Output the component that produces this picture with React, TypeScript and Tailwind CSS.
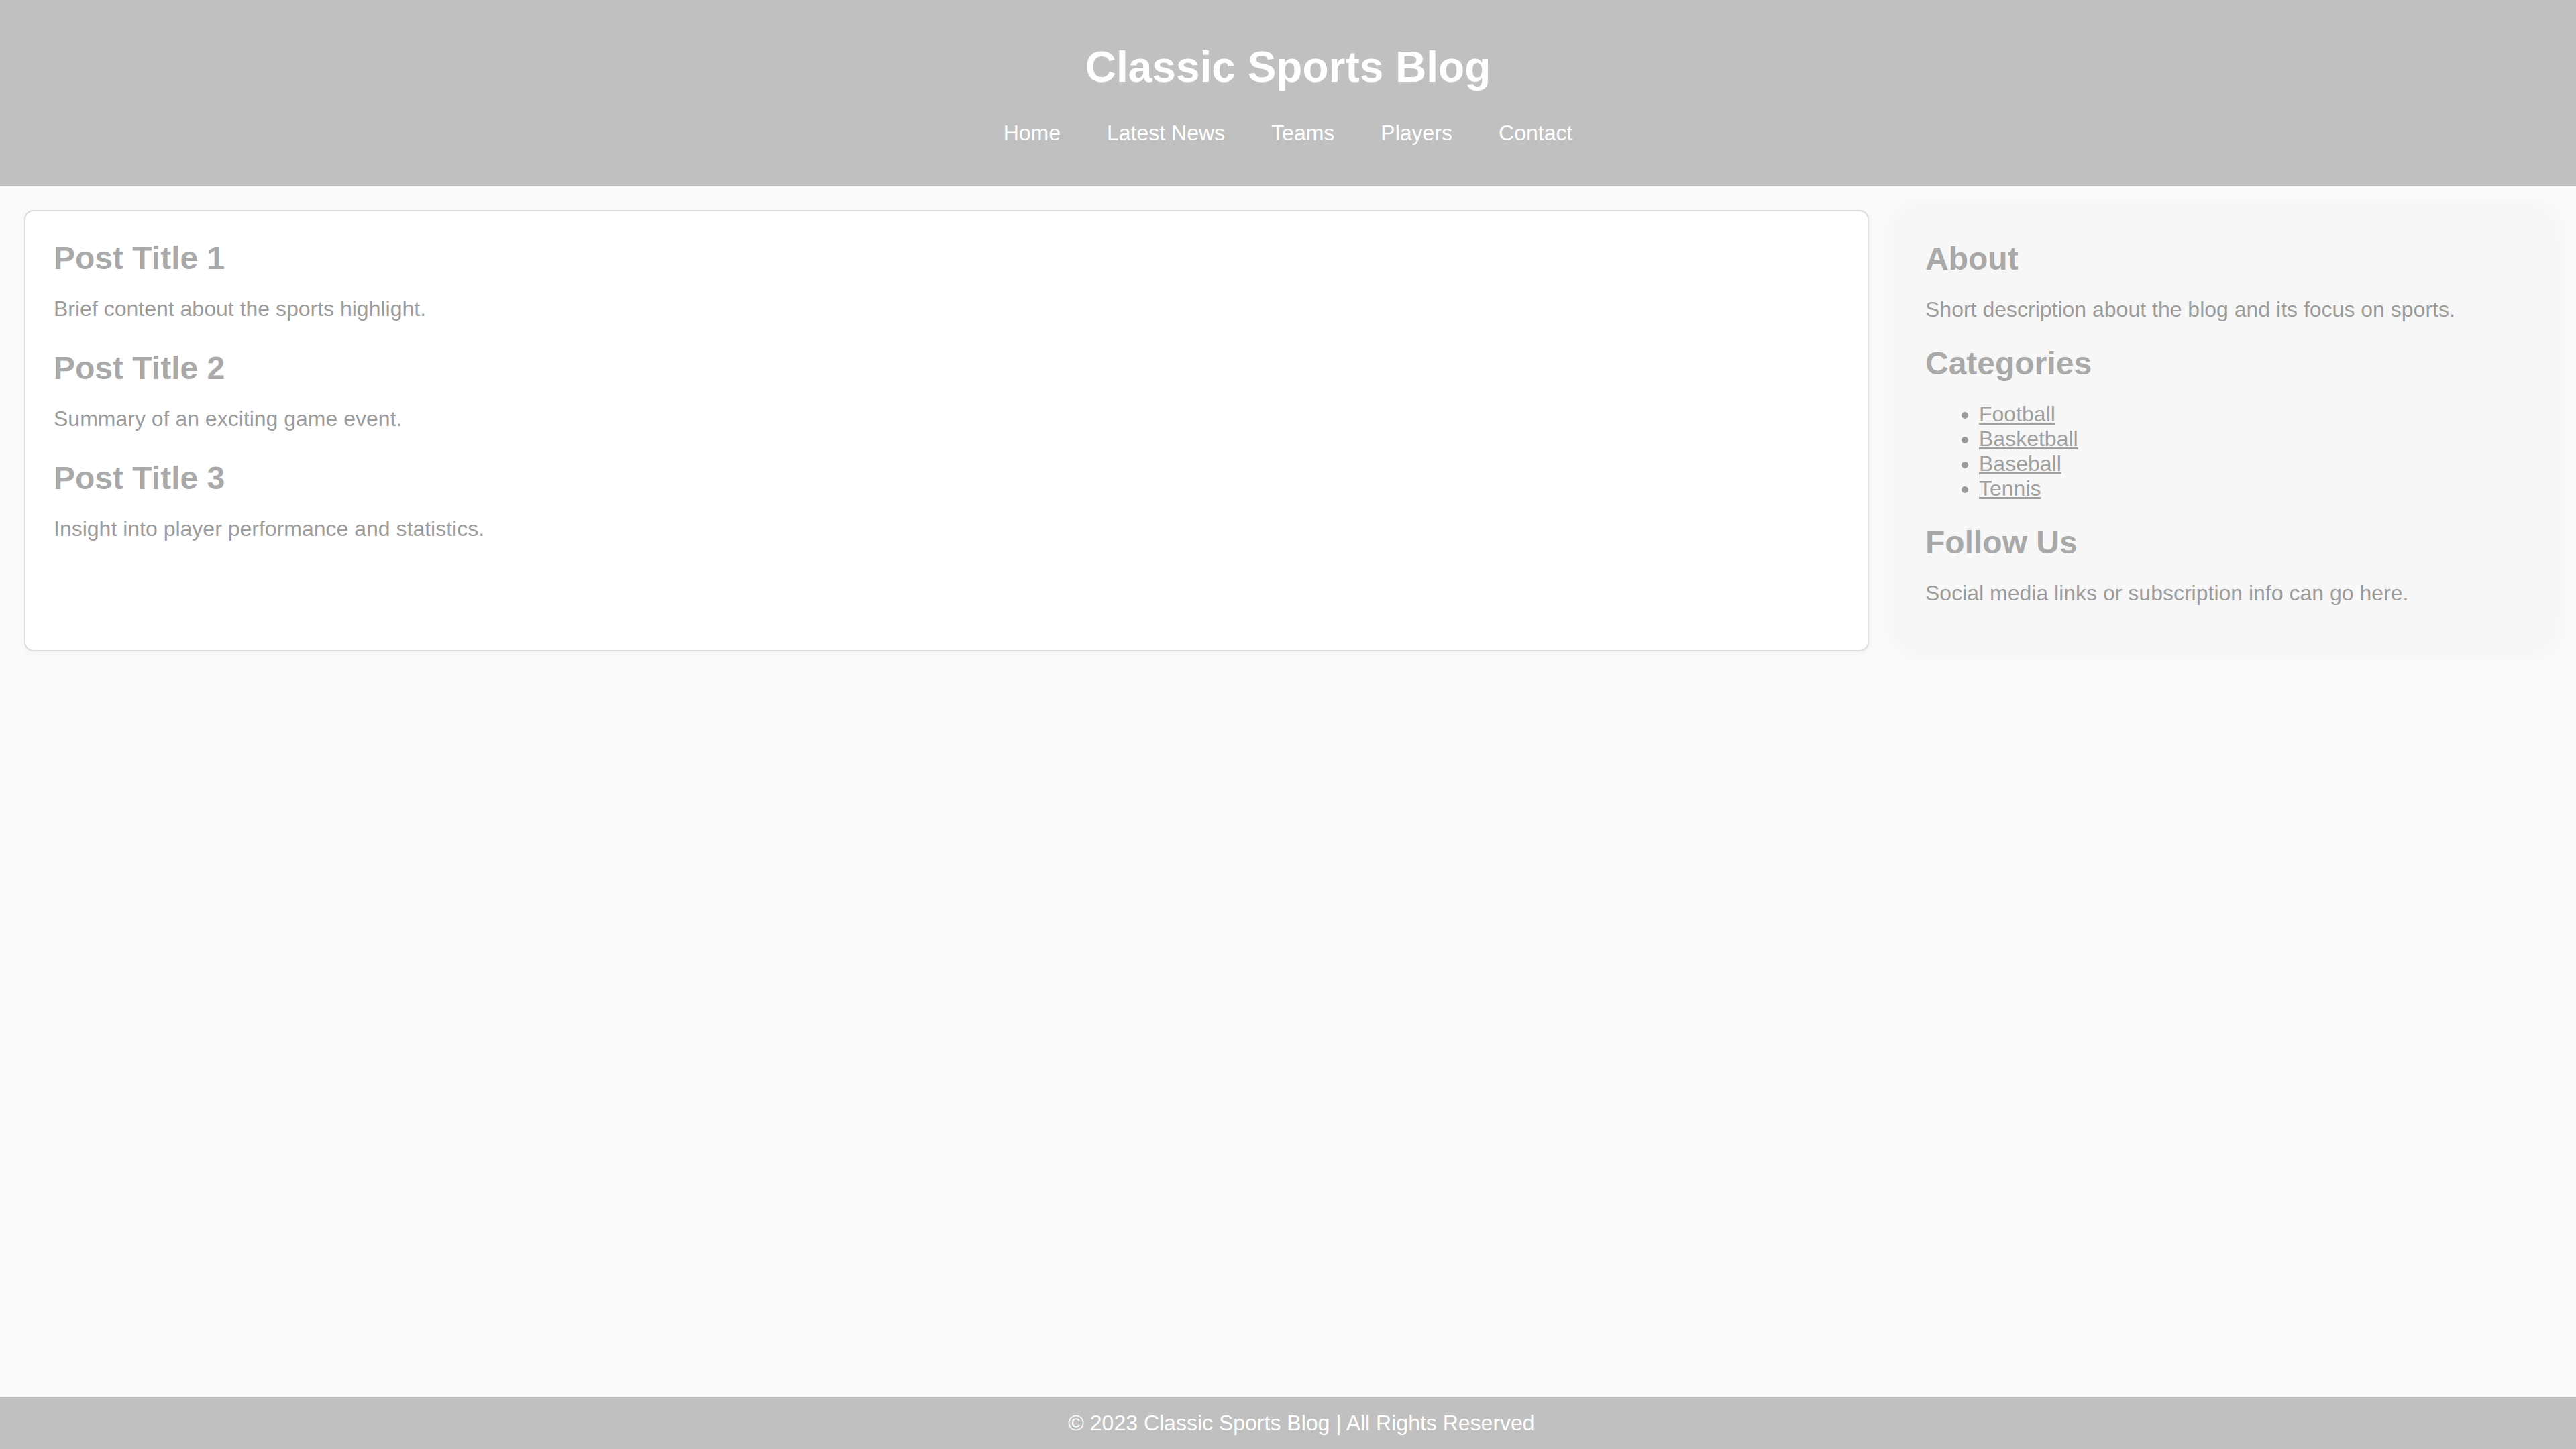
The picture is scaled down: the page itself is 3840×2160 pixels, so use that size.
import React from 'react';

const navLinks = ['Home', 'Latest News', 'Teams', 'Players', 'Contact'];

const posts = [
    { title: 'Post Title 1', body: 'Brief content about the sports highlight.' },
    { title: 'Post Title 2', body: 'Summary of an exciting game event.' },
    { title: 'Post Title 3', body: 'Insight into player performance and statistics.' },
];

const categories = ['Football', 'Basketball', 'Baseball', 'Tennis'];

const App: React.FC = () => {
    return (
        <div className="min-h-screen flex flex-col bg-[#fafafa] font-['Liberation_Sans',Arial,sans-serif] text-[32px] leading-[37px]">
            {/* Header */}
            <header className="bg-[#c0c0c0] text-white text-center pt-[20px] pb-[60px]">
                <h1 className="my-[43px] text-[64px] leading-[74px] font-bold">Classic Sports Blog</h1>
                <nav className="flex justify-center gap-[69px]">
                    {navLinks.map((link) => (
                        <a key={link} href="#" className="text-white">
                            {link}
                        </a>
                    ))}
                </nav>
            </header>

            {/* Main content */}
            <main className="flex-1 flex items-stretch gap-[44px] px-[36px] pt-[36px] pb-[40px]">
                <section className="flex-1 self-start min-h-[658px] bg-white border-2 border-[#dcdcdc] rounded-[14px] shadow-[0_2px_8px_rgba(0,0,0,0.04)] pt-[42px] pl-[42px] pr-[40px] pb-[40px]">
                    {posts.map((post) => (
                        <article key={post.title} className="mb-[42px]">
                            <h2 className="mb-[30px] text-[48px] leading-[55px] font-bold text-[#a9a9a9]">{post.title}</h2>
                            <p className="text-[#9c9c9c]">{post.body}</p>
                        </article>
                    ))}
                </section>

                <aside className="w-[974px] self-start bg-[#f7f7f7] rounded-[22px] shadow-[0_0_40px_rgba(0,0,0,0.04)] pt-[45px] px-[40px] pb-[64px]">
                    <h2 className="mb-[30px] text-[48px] leading-[55px] font-bold text-[#a9a9a9]">About</h2>
                    <p className="mb-[34px] text-[#9c9c9c]">Short description about the blog and its focus on sports.</p>

                    <h2 className="mb-[30px] text-[48px] leading-[55px] font-bold text-[#a9a9a9]">Categories</h2>
                    <ul className="mb-[34px] pl-[80px] list-disc text-[#9c9c9c]">
                        {categories.map((cat) => (
                            <li key={cat}>
                                <a href="#" className="underline text-[#a0a0a0]">
                                    {cat}
                                </a>
                            </li>
                        ))}
                    </ul>

                    <h2 className="mb-[30px] text-[48px] leading-[55px] font-bold text-[#a9a9a9]">Follow Us</h2>
                    <p className="text-[#9c9c9c]">Social media links or subscription info can go here.</p>
                </aside>
            </main>

            {/* Footer */}
            <footer className="bg-[#c0c0c0] text-white text-center py-[20px] pl-[40px]">
                © 2023 Classic Sports Blog | All Rights Reserved
            </footer>
        </div>
    );
};

export default App;
